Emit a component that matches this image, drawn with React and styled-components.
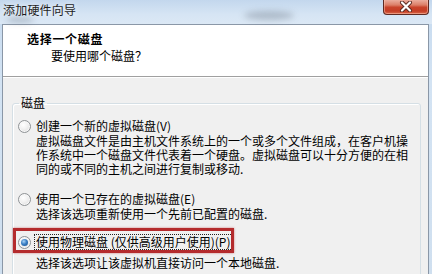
import React from "react";
import styled, { createGlobalStyle } from "styled-components";

const Global = createGlobalStyle`
  html, body { margin: 0; padding: 0; }
  body {
    width: 432px; height: 274px; overflow: hidden;
    font-family: "Noto Sans CJK SC", "Liberation Sans", sans-serif;
    background: #cfe0f2;
  }
`;

const Window = styled.div`
  position: relative;
  width: 432px;
  height: 274px;
  overflow: hidden;
  background: linear-gradient(180deg, #c6daef 0%, #d3e3f3 30%, #cfdfef 100%);
  display: flex;
  flex-direction: column;
`;

const TitleBar = styled.div`
  position: relative;
  height: 24px;
  flex: none;
  display: flex;
  align-items: flex-start;
  justify-content: space-between;
  background: linear-gradient(180deg, #c3d7ed 0%, #d6e5f4 60%, #dbe8f5 100%);
`;

const Smudge = styled.div`
  position: absolute;
  left: ${(p) => p.$x}px;
  top: ${(p) => p.$y}px;
  width: ${(p) => p.$w}px;
  height: ${(p) => p.$h}px;
  border-radius: 50%;
  background: rgba(70, 80, 95, ${(p) => p.$a});
  filter: blur(3px);
`;

const Title = styled.div`
  position: relative;
  padding: 3px 0 0 3px;
  font-size: 12px;
  line-height: 14px;
  letter-spacing: 0.2px;
  color: #1e1e1e;
  text-shadow: 0 0 6px rgba(255, 255, 255, 0.9);
`;

const CloseButton = styled.div`
  position: relative;
  margin: -1px 3px 0 0;
  width: 44px;
  height: 15px;
  border: 1px solid #5e2a22;
  border-top: none;
  border-radius: 0 0 4px 4px;
  background: linear-gradient(180deg, #eeb6a8 0%, #dc7f68 40%, #c9442b 55%, #c43d25 80%, #d96a4c 100%);
  box-shadow: inset 0 0 0 1px rgba(255, 200, 180, 0.5);
  display: flex;
  align-items: center;
  justify-content: center;
`;

const Client = styled.div`
  flex: 1;
  margin: 0 3px 0 2px;
  border-left: 1px solid #8a97a7;
  border-right: 1px solid #8a97a7;
  border-top: 1px solid #8a97a7;
  background: #f0f0f0;
  display: flex;
  flex-direction: column;
`;

const Header = styled.div`
  flex: none;
  background: #ffffff;
  border-bottom: 1px solid #a0a0a0;
  padding: 7px 0 0 24px;
  box-sizing: border-box;
  height: 52px;
`;

const HeaderTitle = styled.div`
  font-size: 12px;
  font-weight: bold;
  line-height: 14px;
  letter-spacing: 0.7px;
  color: #000;
`;

const HeaderSub = styled.div`
  margin: 3px 0 0 24px;
  font-size: 12px;
  line-height: 14px;
  color: #000;
`;

const Body = styled.div`
  flex: 1;
  border-top: 1px solid #ffffff;
  padding: 18px 7px 0 9px;
`;

const GroupBox = styled.fieldset`
  margin: 0;
  padding: 9px 0 0 5px;
  border: 1px solid #d5dfe5;
  border-radius: 3px;
  box-shadow: inset 1px 1px 0 #ffffff;
  min-width: 0;
  height: 200px;
`;

const Legend = styled.legend`
  padding: 0 2px 0 2px;
  margin-left: 1px;
  font-size: 12px;
  line-height: 14px;
  color: #000;
`;

const Option = styled.div`
  position: relative;
  margin-top: ${(p) => p.$gap || 0}px;
`;

const RadioRow = styled.div`
  display: flex;
  align-items: center;
  gap: 3px;
  height: 14px;
`;

const Radio = styled.span`
  position: relative;
  flex: none;
  width: 11px;
  height: 11px;
  border-radius: 50%;
  border: 1px solid #8f9396;
  background: radial-gradient(circle at 40% 35%, #ffffff 0%, #f2f2f2 40%, #d6d6d6 100%);
  box-shadow: inset 0 0 0 1px #f8f8f8;
  &::after {
    content: "";
    display: ${(p) => (p.$checked ? "block" : "none")};
    position: absolute;
    left: 2px;
    top: 2px;
    width: 7px;
    height: 7px;
    border-radius: 50%;
    background: radial-gradient(circle at 40% 35%, #a9d4f7 0%, #3b7fc4 45%, #134c8c 100%);
  }
`;

const Label = styled.span`
  font-size: 12px;
  line-height: 14px;
  color: #000;
  white-space: nowrap;
  padding: 0 1px;
  border: 1px dotted ${(p) => (p.$focused ? "#222" : "transparent")};
  margin: -1px 0;
`;

const Desc = styled.div`
  margin: ${(p) => p.$top ?? 1}px 0 0 18px;
  font-size: 12px;
  line-height: 14px;
  color: #000;
  white-space: nowrap;
`;

const Highlight = styled.div`
  position: absolute;
  left: -5px;
  top: -7px;
  width: 215px;
  height: 19px;
  border: 3px solid #b42b2d;
  box-shadow: 0 0 2px rgba(180, 43, 45, 0.6);
  pointer-events: none;
`;

export default function App() {
  return (
    <>
      <Global />
      <Window>
        <TitleBar>
          <Smudge $x={6} $y={17} $w={28} $h={5} $a={0.35} />
          <Smudge $x={244} $y={11} $w={50} $h={9} $a={0.28} />
          <Title>添加硬件向导</Title>
          <CloseButton>
            <svg width="14" height="11" viewBox="0 0 14 11">
              <path d="M3 1.5 L11 9.5 M11 1.5 L3 9.5" stroke="#5a2a22" strokeWidth="4" strokeLinecap="round" />
              <path d="M3 1.5 L11 9.5 M11 1.5 L3 9.5" stroke="#ffffff" strokeWidth="2.2" strokeLinecap="round" />
            </svg>
          </CloseButton>
        </TitleBar>
        <Client>
          <Header>
            <HeaderTitle>选择一个磁盘</HeaderTitle>
            <HeaderSub>要使用哪个磁盘？</HeaderSub>
          </Header>
          <Body>
            <GroupBox>
              <Legend>磁盘</Legend>
              <Option>
                <RadioRow>
                  <Radio />
                  <Label>创建一个新的虚拟磁盘(V)</Label>
                </RadioRow>
                <Desc>虚拟磁盘文件是由主机文件系统上的一个或多个文件组成，在客户机操</Desc>
                <Desc $top={0}>作系统中一个磁盘文件代表着一个硬盘。虚拟磁盘可以十分方便的在相</Desc>
                <Desc $top={0}>同的或不同的主机之间进行复制或移动.</Desc>
              </Option>
              <Option $gap={16}>
                <RadioRow>
                  <Radio />
                  <Label>使用一个已存在的虚拟磁盘(E)</Label>
                </RadioRow>
                <Desc>选择该选项重新使用一个先前已配置的磁盘.</Desc>
              </Option>
              <Option $gap={14}>
                <RadioRow>
                  <Radio $checked />
                  <Label $focused>使用物理磁盘 (仅供高级用户使用)(P)</Label>
                </RadioRow>
                <Highlight />
                <Desc $top={7}>选择该选项让该虚拟机直接访问一个本地磁盘.</Desc>
              </Option>
            </GroupBox>
          </Body>
        </Client>
      </Window>
    </>
  );
}
